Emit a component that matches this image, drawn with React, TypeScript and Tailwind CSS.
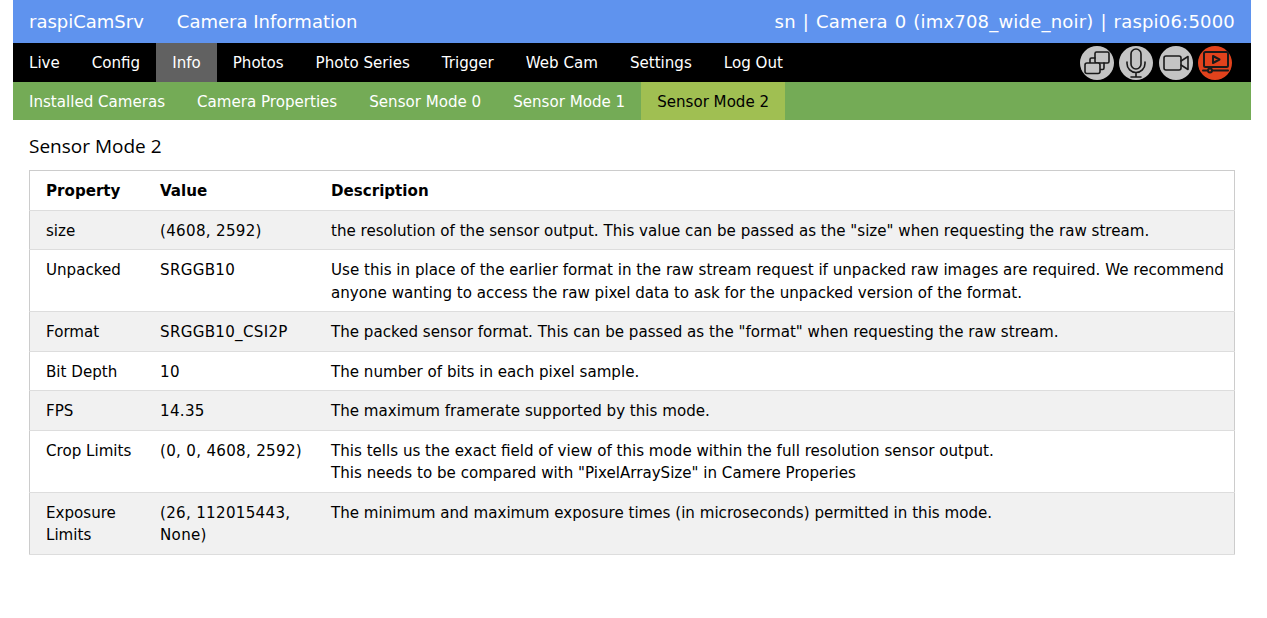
const MAIN_NAV = ['Live', 'Config', 'Info', 'Photos', 'Photo Series', 'Trigger', 'Web Cam', 'Settings', 'Log Out'];
const SUB_NAV = ['Installed Cameras', 'Camera Properties', 'Sensor Mode 0', 'Sensor Mode 1', 'Sensor Mode 2'];

const ROWS: { property: string; value: string; description: string[] }[] = [
    {
        property: 'size',
        value: '(4608, 2592)',
        description: ['the resolution of the sensor output. This value can be passed as the "size" when requesting the raw stream.'],
    },
    {
        property: 'Unpacked',
        value: 'SRGGB10',
        description: [
            'Use this in place of the earlier format in the raw stream request if unpacked raw images are required. We recommend',
            'anyone wanting to access the raw pixel data to ask for the unpacked version of the format.',
        ],
    },
    {
        property: 'Format',
        value: 'SRGGB10_CSI2P',
        description: ['The packed sensor format. This can be passed as the "format" when requesting the raw stream.'],
    },
    { property: 'Bit Depth', value: '10', description: ['The number of bits in each pixel sample.'] },
    { property: 'FPS', value: '14.35', description: ['The maximum framerate supported by this mode.'] },
    {
        property: 'Crop Limits',
        value: '(0, 0, 4608, 2592)',
        description: [
            'This tells us the exact field of view of this mode within the full resolution sensor output.',
            'This needs to be compared with "PixelArraySize" in Camere Properies',
        ],
    },
    {
        property: 'Exposure Limits',
        value: '(26, 112015443, None)',
        description: ['The minimum and maximum exposure times (in microseconds) permitted in this mode.'],
    },
];

const RoundIcon = ({ bg, children }: { bg: string; children: React.ReactNode }) => (
    <div className={`w-[34px] h-[34px] rounded-full ${bg}`}>
        <svg viewBox="0 0 34 34" className="w-[34px] h-[34px]" fill="none" stroke="#1a1a1a" strokeWidth="1.6" strokeLinecap="round" strokeLinejoin="round">
            {children}
        </svg>
    </div>
);

export default function App() {
    return (
        <div className="min-h-screen bg-white pl-[13px] pr-[16px] font-['DejaVu_Sans',Verdana,sans-serif] text-[15.08px] text-black">
            <div className="flex items-center justify-between h-[43px] px-4 bg-[#5f93ee] text-white text-[18px]">
                <div className="flex gap-[33px]">
                    <span>raspiCamSrv</span>
                    <span>Camera Information</span>
                </div>
                <span className="tracking-[0.2px] [word-spacing:1px]">sn | Camera 0 (imx708_wide_noir) | raspi06:5000</span>
            </div>

            <div className="flex items-center justify-between h-[39px] bg-black text-white">
                <div className="flex h-full">
                    {MAIN_NAV.map((item) => (
                        <div key={item} className={`flex items-center px-4 pt-px ${item === 'Info' ? 'bg-[#616161]' : ''}`}>
                            {item}
                        </div>
                    ))}
                </div>
                <div className="flex items-center gap-[5.3px] pr-[19px]">
                    <RoundIcon bg="bg-[#c4c4c4]">
                        <rect x="15" y="6" width="14" height="11" rx="1.5" />
                        <path d="M10 17v-3.5a1.5 1.5 0 0 1 1.5-1.5H15M24 17v5a1.5 1.5 0 0 1-1.5 1.5H20" />
                        <rect x="5" y="17" width="15" height="10.5" rx="2" fill="#c4c4c4" />
                    </RoundIcon>
                    <RoundIcon bg="bg-[#c4c4c4]">
                        <rect x="12" y="3" width="10" height="20" rx="5" />
                        <path d="M8 16v1.5a9 9 0 0 0 18 0V16M17 26.5V31M12 31h10" />
                    </RoundIcon>
                    <RoundIcon bg="bg-[#c4c4c4]">
                        <rect x="5" y="10" width="17" height="14" rx="2" />
                        <path d="M22 15l7-4.5v13L22 19" />
                    </RoundIcon>
                    <RoundIcon bg="bg-[#e2421c]">
                        <path d="M8 21h-.5A1.5 1.5 0 0 1 6 19.5v-12A1.5 1.5 0 0 1 7.5 6h21A1.5 1.5 0 0 1 30 7.5v12a1.5 1.5 0 0 1-1.5 1.5H8z" strokeWidth="2" />
                        <path d="M15 10l6.5 3.5L15 17z" strokeWidth="2" />
                        <path d="M5 24.5h5M14 24.5h16" strokeWidth="2" />
                        <circle cx="12" cy="24.5" r="2" strokeWidth="2" />
                    </RoundIcon>
                </div>
            </div>

            <div className="flex h-[38px] bg-[#74ab56] text-white">
                {SUB_NAV.map((item) => (
                    <div
                        key={item}
                        className={`flex items-center px-4 pt-[2px] ${item === 'Sensor Mode 2' ? 'bg-[#a0bf52] text-black' : ''}`}
                    >
                        {item}
                    </div>
                ))}
            </div>

            <div className="px-4">
                <h3 className="mt-[13px] mb-[11px] h-[26px] leading-[26px] text-[19px] font-['Open_Sans',sans-serif]">Sensor Mode 2</h3>
                <table className="w-full table-fixed border-collapse border border-[#cccccc] text-[15.1px] leading-[22.5px]">
                    <colgroup>
                        <col className="w-[122.5px]" />
                        <col className="w-[171px]" />
                        <col />
                    </colgroup>
                    <thead>
                        <tr className="border-b border-[#dddddd]">
                            <th className="pl-4 pr-2 pt-[9px] pb-[7px] text-left font-bold">Property</th>
                            <th className="px-2 pt-[9px] pb-[7px] text-left font-bold">Value</th>
                            <th className="px-2 pt-[9px] pb-[7px] text-left font-bold">Description</th>
                        </tr>
                    </thead>
                    <tbody>
                        {ROWS.map((row, i) => (
                            <tr key={row.property} className={`border-b border-[#dddddd] align-top ${i % 2 === 0 ? 'bg-[#f1f1f1]' : ''}`}>
                                <td className="pl-4 pr-2 pt-[9px] pb-[7px]">{row.property}</td>
                                <td className="px-2 pt-[9px] pb-[7px] tracking-[0.3px]">{row.value}</td>
                                <td className="px-2 pt-[9px] pb-[7px]">
                                    {row.description.map((line) => (
                                        <div key={line}>{line}</div>
                                    ))}
                                </td>
                            </tr>
                        ))}
                    </tbody>
                </table>
            </div>
        </div>
    );
}
